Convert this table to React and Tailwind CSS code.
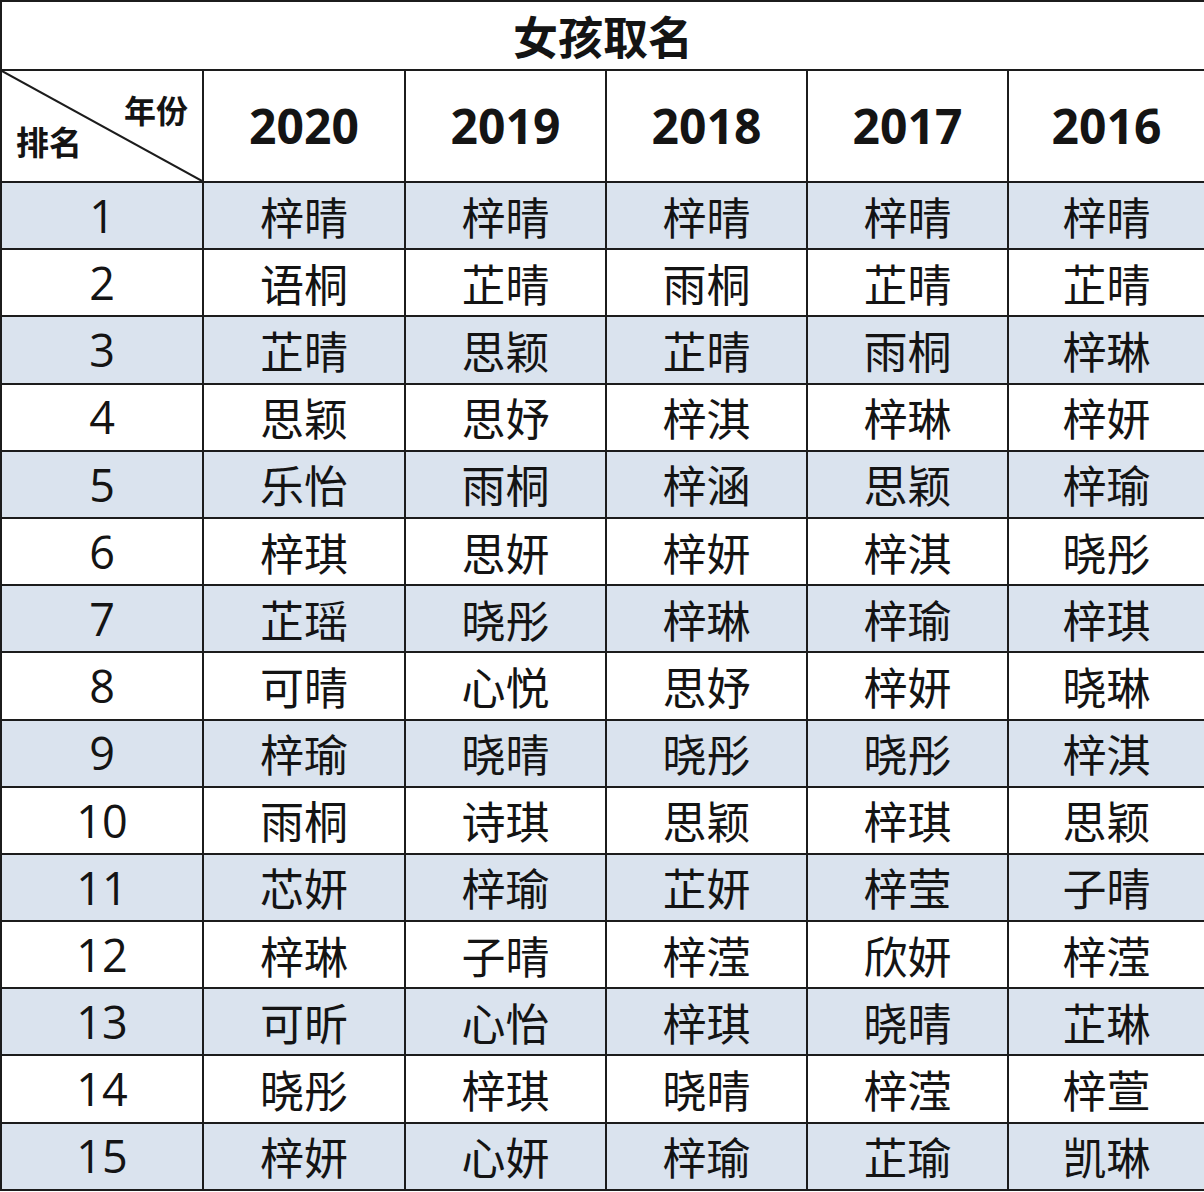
import React from "react";

// rank rows, one entry per year column (2020 → 2016)
const years = ["2020", "2019", "2018", "2017", "2016"];

const rows = [
  ["梓晴", "梓晴", "梓晴", "梓晴", "梓晴"],
  ["语桐", "芷晴", "雨桐", "芷晴", "芷晴"],
  ["芷晴", "思颖", "芷晴", "雨桐", "梓琳"],
  ["思颖", "思妤", "梓淇", "梓琳", "梓妍"],
  ["乐怡", "雨桐", "梓涵", "思颖", "梓瑜"],
  ["梓琪", "思妍", "梓妍", "梓淇", "晓彤"],
  ["芷瑶", "晓彤", "梓琳", "梓瑜", "梓琪"],
  ["可晴", "心悦", "思妤", "梓妍", "晓琳"],
  ["梓瑜", "晓晴", "晓彤", "晓彤", "梓淇"],
  ["雨桐", "诗琪", "思颖", "梓琪", "思颖"],
  ["芯妍", "梓瑜", "芷妍", "梓莹", "子晴"],
  ["梓琳", "子晴", "梓滢", "欣妍", "梓滢"],
  ["可昕", "心怡", "梓琪", "晓晴", "芷琳"],
  ["晓彤", "梓琪", "晓晴", "梓滢", "梓萱"],
  ["梓妍", "心妍", "梓瑜", "芷瑜", "凯琳"],
];

const cjk = "font-['Noto_Sans_CJK_SC',sans-serif]";
const latin = "font-['Open_Sans','Noto_Sans_CJK_SC',sans-serif]";

export default function App() {
  return (
    <div className="w-[1204px] h-[1192px] bg-white">
      <div className="grid grid-cols-[200px_200px_199px_199px_199px_1fr] grid-rows-[67px_110px_repeat(15,65.2px)] gap-[2px] bg-[#1c1c1c] pl-[2px] pt-[2px] pb-[2px] text-[#141414]">
        {/* title row */}
        <div className={`col-span-6 bg-white flex items-center justify-center text-[45px] font-bold ${cjk}`}>
          女孩取名
        </div>

        {/* header row */}
        <div className={`relative bg-white ${cjk} font-bold`}>
          <svg className="absolute inset-0 w-full h-full" viewBox="0 0 200 110" preserveAspectRatio="none">
            <line x1="0" y1="0" x2="200" y2="110" stroke="#1c1c1c" strokeWidth="2" />
          </svg>
          <span className="absolute left-[122px] top-[22px] text-[32px] leading-none">年份</span>
          <span className="absolute left-[14px] top-[54px] text-[33px] leading-none">排名</span>
        </div>
        {years.map((y) => (
          <div key={y} className={`bg-white flex items-center justify-center text-[48px] font-bold ${latin}`}>
            {y}
          </div>
        ))}

        {/* ranking rows */}
        {rows.map((names, i) => {
          const bg = i % 2 === 0 ? "bg-[#dae3ee]" : "bg-white";
          return (
            <React.Fragment key={i}>
              <div className={`${bg} flex items-center justify-center text-[45px] ${latin}`}>{i + 1}</div>
              {names.map((n, j) => (
                <div key={j} className={`${bg} flex items-center justify-center text-[44px] ${cjk}`}>
                  {n}
                </div>
              ))}
            </React.Fragment>
          );
        })}
      </div>
    </div>
  );
}
